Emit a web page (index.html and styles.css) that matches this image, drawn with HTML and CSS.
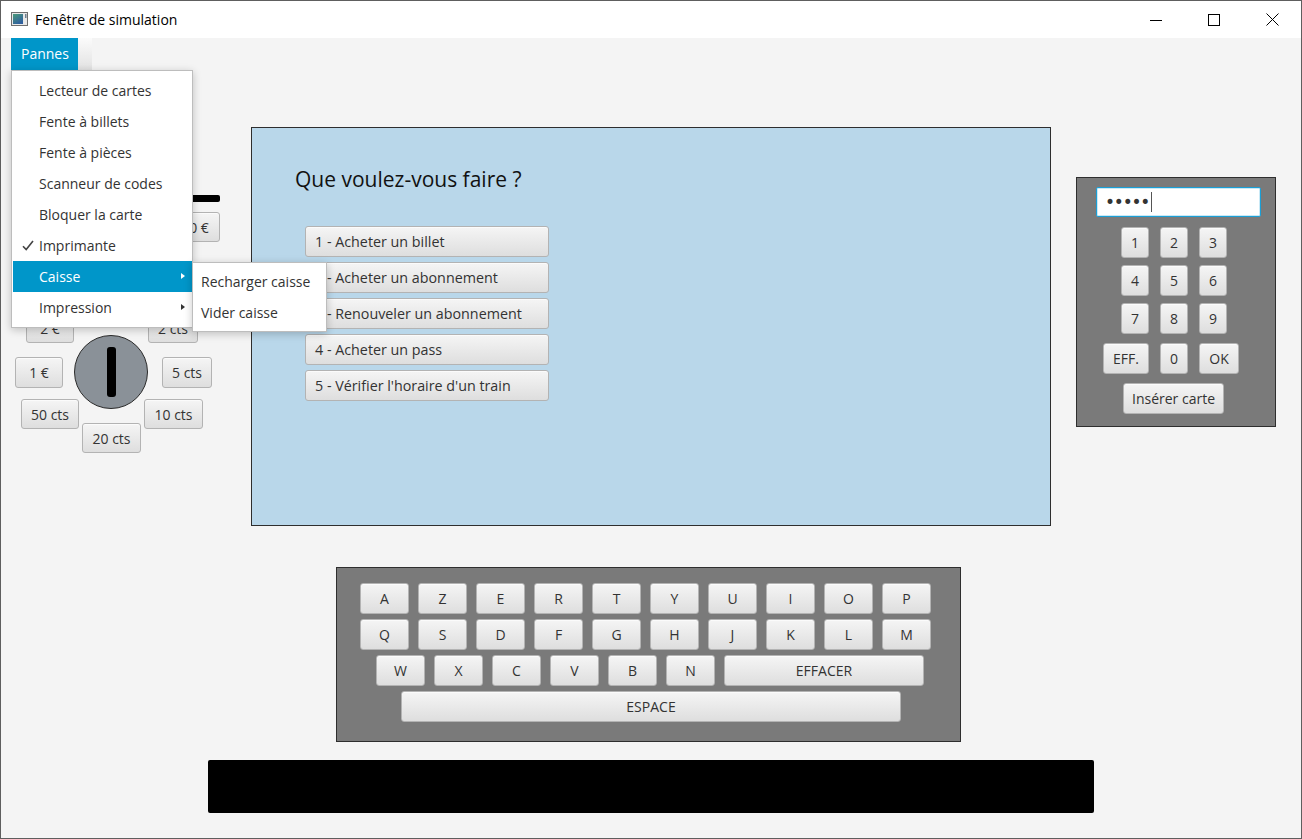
FILE: index.html
```html
<!DOCTYPE html>
<html lang="fr">
<head>
<meta charset="utf-8">
<title>Fenêtre de simulation</title>
<link rel="stylesheet" href="styles.css">
</head>
<body>
<div class="window">
  <header class="titlebar">
    <svg class="app-icon" width="18" height="15" viewBox="0 0 18 15">
      <defs>
        <linearGradient id="ig" x1="0" y1="0" x2="0.6" y2="1">
          <stop offset="0" stop-color="#4a9a7a"/>
          <stop offset="1" stop-color="#2f5f9e"/>
        </linearGradient>
      </defs>
      <rect x="0.5" y="0.5" width="16" height="13" fill="#e8e8e8" stroke="#6e6e6e"/>
      <rect x="2" y="2" width="10" height="10" fill="url(#ig)"/>
      <rect x="14" y="2" width="1.5" height="4" fill="#6e7f8e"/>
    </svg>
    <span class="title">Fenêtre de simulation</span>
    <div class="controls">
      <span class="ctl"><svg width="12" height="12" viewBox="0 0 12 12"><path d="M0 6.5H12" stroke="#000" stroke-width="1"/></svg></span>
      <span class="ctl"><svg width="12" height="12" viewBox="0 0 12 12"><rect x="0.5" y="0.5" width="11" height="11" fill="none" stroke="#000"/></svg></span>
      <span class="ctl"><svg width="13" height="13" viewBox="0 0 13 13"><path d="M0.5 0.5L12.5 12.5M12.5 0.5L0.5 12.5" stroke="#000" stroke-width="1"/></svg></span>
    </div>
  </header>

  <main class="content">
    <nav class="menubar"><span class="menu-title">Pannes</span></nav>

    <div class="top-row">
      <section class="left-panel">
        <div class="bill-slot"></div>
        <div class="bill-row">
          <button class="btn bill">20 €</button>
        </div>
        <div class="coin-slot"><span class="coin-hole"></span></div>
        <button class="btn coin c-2e">2 €</button>
        <button class="btn coin c-2c">2 cts</button>
        <button class="btn coin c-1e">1 €</button>
        <button class="btn coin c-5c">5 cts</button>
        <button class="btn coin c-50c">50 cts</button>
        <button class="btn coin c-10c">10 cts</button>
        <button class="btn coin c-20c">20 cts</button>
      </section>

      <section class="screen">
        <h1 class="question">Que voulez-vous faire ?</h1>
        <div class="choices">
          <button class="btn choice">1 - Acheter un billet</button>
          <button class="btn choice">2 - Acheter un abonnement</button>
          <button class="btn choice">3 - Renouveler un abonnement</button>
          <button class="btn choice">4 - Acheter un pass</button>
          <button class="btn choice">5 - Vérifier l'horaire d'un train</button>
        </div>
      </section>

      <section class="numpad">
        <div class="pin-field"><span class="pin-dots">•••••</span><span class="caret"></span></div>
        <div class="pad-grid">
          <button class="btn num">1</button>
          <button class="btn num">2</button>
          <button class="btn num">3</button>
          <button class="btn num">4</button>
          <button class="btn num">5</button>
          <button class="btn num">6</button>
          <button class="btn num">7</button>
          <button class="btn num">8</button>
          <button class="btn num">9</button>
          <button class="btn num eff last">EFF.</button>
          <button class="btn num last">0</button>
          <button class="btn num ok last">OK</button>
        </div>
        <button class="btn insert">Insérer carte</button>
      </section>
    </div>

    <section class="keyboard">
      <div class="kb-row r1">
        <button class="btn key">A</button><button class="btn key">Z</button><button class="btn key">E</button><button class="btn key">R</button><button class="btn key">T</button><button class="btn key">Y</button><button class="btn key">U</button><button class="btn key">I</button><button class="btn key">O</button><button class="btn key">P</button>
      </div>
      <div class="kb-row r1">
        <button class="btn key">Q</button><button class="btn key">S</button><button class="btn key">D</button><button class="btn key">F</button><button class="btn key">G</button><button class="btn key">H</button><button class="btn key">J</button><button class="btn key">K</button><button class="btn key">L</button><button class="btn key">M</button>
      </div>
      <div class="kb-row r3">
        <button class="btn key">W</button><button class="btn key">X</button><button class="btn key">C</button><button class="btn key">V</button><button class="btn key">B</button><button class="btn key">N</button><button class="btn key wide">EFFACER</button>
      </div>
      <div class="kb-row r4">
        <button class="btn key space">ESPACE</button>
      </div>
    </section>

    <div class="ticket-bar"></div>
  </main>

  <div class="menu-popup">
    <div class="mi">Lecteur de cartes</div>
    <div class="mi">Fente à billets</div>
    <div class="mi">Fente à pièces</div>
    <div class="mi">Scanneur de codes</div>
    <div class="mi">Bloquer la carte</div>
    <div class="mi checked"><svg class="check" width="12" height="11" viewBox="0 0 12 11"><path d="M1 6.2L4.2 9.6L11 1" fill="none" stroke="#444" stroke-width="1.6"/></svg>Imprimante</div>
    <div class="mi active sub">Caisse</div>
    <div class="mi sub">Impression</div>
  </div>
  <div class="submenu">
    <div class="si">Recharger caisse</div>
    <div class="si">Vider caisse</div>
  </div>
</div>
</body>
</html>
```

FILE: styles.css
```css
* { box-sizing: border-box; }

html, body {
  margin: 0;
  padding: 0;
  background: #f4f4f4;
}

body {
  font-family: "Open Sans", "Noto Sans", sans-serif;
  font-size: 14px;
  color: #333;
}

.window {
  position: relative;
  width: 1302px;
  height: 839px;
  border: 1px solid #5e5e5e;
  background: #f4f4f4;
  overflow: hidden;
}

/* ---------- title bar ---------- */
.titlebar {
  height: 37px;
  background: #fff;
  display: flex;
  align-items: center;
}

.app-icon {
  margin-left: 10px;
  margin-top: -1px;
}

.title {
  margin-left: 6px;
  font-size: 14px;
  color: #000;
}

.controls {
  margin-left: auto;
  display: flex;
  height: 100%;
}

.ctl {
  width: 58px;
  display: flex;
  align-items: center;
  justify-content: center;
}

/* ---------- content ---------- */
.content {
  height: 800px;
  background: #f4f4f4;
  display: flex;
  flex-direction: column;
  align-items: flex-start;
}

.menubar {
  margin-left: 10px;
  width: 81px;
  height: 32px;
  background: linear-gradient(#fbfbfb, #e2e2e2);
  display: flex;
}

.menu-title {
  width: 67px;
  background: #0096c9;
  color: #fff;
  padding-left: 10px;
  line-height: 32px;
  font-size: 14px;
}

.top-row {
  margin-top: 57px;
  display: flex;
  align-items: flex-start;
}

/* ---------- generic button ---------- */
.btn {
  margin: 0;
  height: 31px;
  padding: 0;
  border: 1px solid #b3b3b3;
  border-radius: 3px;
  background: linear-gradient(#f5f5f5, #dedede);
  box-shadow: inset 0 1px 0 #fbfbfb;
  color: #333;
  font-family: "Open Sans", "Noto Sans", sans-serif;
  font-size: 14px;
  display: flex;
  align-items: center;
  justify-content: center;
  white-space: nowrap;
}

/* ---------- left panel (coins) ---------- */
.left-panel {
  position: relative;
  width: 250px;
  height: 399px;
  padding-top: 68px;
}

.bill-slot {
  margin-left: 70px;
  width: 149px;
  height: 7px;
  background: #000;
  border-radius: 2px;
}

.bill-row {
  margin-top: 10px;
  display: flex;
  justify-content: flex-end;
  gap: 8px;
  padding-right: 31px;
}

.bill {
  width: 50px;
  height: 30px;
}

.coin-slot {
  position: absolute;
  left: 73px;
  top: 208px;
  width: 74px;
  height: 74px;
  border-radius: 50%;
  background: #8a9198;
  border: 1px solid #2a2a2a;
  display: flex;
  align-items: center;
  justify-content: center;
}

.coin-hole {
  width: 9px;
  height: 50px;
  background: #000;
  border-radius: 3px;
}

.coin {
  position: absolute;
  height: 30px;
}

.c-2e  { left: 25px;  top: 186px; width: 48px; }
.c-2c  { left: 147px; top: 186px; width: 50px; }
.c-1e  { left: 14px;  top: 230px; width: 48px; height: 31px; }
.c-5c  { left: 161px; top: 230px; width: 50px; height: 31px; }
.c-50c { left: 20px;  top: 272px; width: 58px; }
.c-10c { left: 143px; top: 272px; width: 59px; }
.c-20c { left: 81px;  top: 296px; width: 59px; }

/* ---------- screen ---------- */
.screen {
  width: 800px;
  height: 399px;
  background: #b9d7ea;
  border: 1px solid #2e2e2e;
  padding: 37px 0 0 43px;
}

.question {
  margin: 0;
  font-weight: normal;
  font-size: 21px;
  line-height: 28px;
  color: #111;
}

.choices {
  margin-top: 33px;
  margin-left: 10px;
  display: flex;
  flex-direction: column;
  gap: 5px;
}

.choice {
  width: 244px;
  justify-content: flex-start;
  padding-left: 9px;
  font-size: 14.3px;
}

/* ---------- numpad ---------- */
.numpad {
  margin-left: 25px;
  margin-top: 50px;
  width: 200px;
  height: 250px;
  background: #7a7a7a;
  border: 1px solid #2e2e2e;
  display: flex;
  flex-direction: column;
  align-items: flex-start;
}

.pin-field {
  margin: 9px 0 0 19px;
  width: 165px;
  height: 30px;
  background: #fff;
  border: 1px solid #1a9fd6;
  box-shadow: inset 0 0 0 1px #c9e9f6;
  border-radius: 2px;
  display: flex;
  align-items: center;
  padding-left: 8px;
}

.pin-dots {
  font-family: "DejaVu Sans", sans-serif;
  font-size: 17px;
  letter-spacing: -1.2px;
  color: #333;
  line-height: 1;
}

.caret {
  width: 1px;
  height: 20px;
  background: #555;
  margin-left: 2px;
}

.pad-grid {
  margin: 10px 0 0 26px;
  display: grid;
  grid-template-columns: 46px 28px 40px;
  grid-auto-rows: 31px;
  column-gap: 11px;
  row-gap: 7px;
}

.num {
  width: 28px;
}

.pad-grid .num:nth-child(3n+1) { justify-self: end; }
.pad-grid .num:nth-child(3n)   { justify-self: start; }

.num.eff { width: 46px; }
.num.ok  { width: 40px; }
.num.last { margin-top: 2px; }

.insert {
  margin: 11px 0 0 46px;
  width: 101px;
}

/* ---------- keyboard ---------- */
.keyboard {
  margin-top: 41px;
  margin-left: 335px;
  width: 625px;
  height: 175px;
  background: #7a7a7a;
  border: 1px solid #2e2e2e;
  padding-top: 15px;
  display: flex;
  flex-direction: column;
  gap: 5px;
}

.kb-row {
  display: flex;
  gap: 9px;
}

.r1 { margin-left: 23px; }
.r3 { margin-left: 39px; }
.r4 { margin-left: 64px; }

.key { width: 49px; }
.key.wide { width: 200px; }
.key.space { width: 500px; }

/* ---------- bottom bar ---------- */
.ticket-bar {
  margin-top: 18px;
  margin-left: 207px;
  width: 886px;
  height: 53px;
  background: #000;
  border-radius: 2px;
}

/* ---------- menus (overlays) ---------- */
.menu-popup {
  position: absolute;
  left: 10px;
  top: 69px;
  width: 182px;
  height: 258px;
  background: #fff;
  border: 1px solid #bdbdbd;
  padding: 4px 0 4px 1px;
  box-shadow: 0 2px 8px rgba(0, 0, 0, 0.22);
}

.mi {
  position: relative;
  height: 31px;
  line-height: 31px;
  padding-left: 26px;
  color: #333;
  font-size: 14px;
}

.mi .check {
  position: absolute;
  left: 9px;
  top: 10px;
}

.mi.active {
  background: #0096c9;
  color: #fff;
}

.mi.sub::after {
  content: "";
  position: absolute;
  right: 7px;
  top: 12px;
  border-left: 4px solid #333;
  border-top: 3.5px solid transparent;
  border-bottom: 3.5px solid transparent;
}

.mi.active.sub::after {
  border-left-color: #fff;
}

.submenu {
  position: absolute;
  left: 191px;
  top: 261px;
  width: 135px;
  height: 70px;
  background: #fff;
  border: 1px solid #bdbdbd;
  padding: 3px 0 3px 8px;
  box-shadow: 0 2px 8px rgba(0, 0, 0, 0.22);
}

.si {
  height: 31px;
  line-height: 31px;
  font-size: 14px;
  color: #333;
}
```
